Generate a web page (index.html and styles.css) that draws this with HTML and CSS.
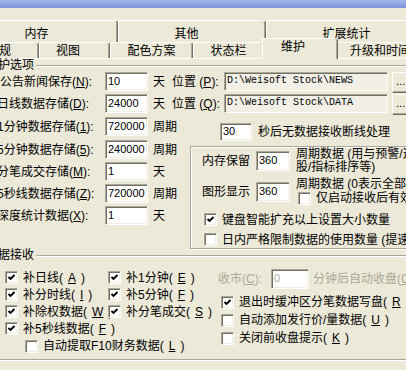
FILE: index.html
```html
<!DOCTYPE html>
<html lang="zh-CN">
<head>
    <meta charset="UTF-8">
    <title>系统设置</title>
    <link rel="stylesheet" href="styles.css">
</head>
<body>
    <div class="titlebar"></div>
    <div class="dialog">
        <div class="tab-row back">
            <div class="tab w-mem">内存</div>
            <div class="tab w-other">其他</div>
            <div class="tab w-ext">扩展统计</div>
        </div>
        <div class="tab-row front">
            <div class="tab w-gen">常规</div>
            <div class="tab w-view">视图</div>
            <div class="tab w-color">配色方案</div>
            <div class="tab w-status">状态栏</div>
            <div class="tab w-maint active">维护</div>
            <div class="tab w-up">升级和时间</div>
        </div>
        <div class="panel">
            <div class="group maint">
                <div class="group-title">维护选项</div>
                <div class="row first">
                    <span class="lbl">公告新闻保存(<u>N</u>):</span>
                    <span class="edit num">10</span>
                    <span class="unit">天</span>
                    <span class="pos">位置 (<u>P</u>):</span>
                    <span class="edit path">D:\Weisoft Stock\NEWS</span>
                    <span class="btn">...</span>
                </div>
                <div class="row">
                    <span class="lbl">日线数据存储(<u>D</u>):</span>
                    <span class="edit num">24000</span>
                    <span class="unit">天</span>
                    <span class="pos">位置 (<u>Q</u>):</span>
                    <span class="edit path">D:\Weisoft Stock\DATA</span>
                    <span class="btn">...</span>
                </div>
                <div class="split">
                    <div class="col-left">
                        <div class="row tall">
                            <span class="lbl">1分钟数据存储(<u>1</u>):</span>
                            <span class="edit num">720000</span>
                            <span class="unit">周期</span>
                        </div>
                        <div class="row">
                            <span class="lbl">5分钟数据存储(<u>5</u>):</span>
                            <span class="edit num">240000</span>
                            <span class="unit">周期</span>
                        </div>
                        <div class="row">
                            <span class="lbl">分笔成交存储(<u>M</u>):</span>
                            <span class="edit num">1</span>
                            <span class="unit">天</span>
                        </div>
                        <div class="row">
                            <span class="lbl">5秒线数据存储(<u>Z</u>):</span>
                            <span class="edit num">720000</span>
                            <span class="unit">周期</span>
                        </div>
                        <div class="row">
                            <span class="lbl">深度统计数据(<u>X</u>):</span>
                            <span class="edit num">1</span>
                            <span class="unit">天</span>
                        </div>
                    </div>
                    <div class="col-right">
                        <div class="timeout">
                            <span class="edit short">30</span>
                            <span class="timeout-text">秒后无数据接收断线处理</span>
                        </div>
                        <div class="subbox">
                            <div class="sub-row mem">
                                <span class="sub-lbl">内存保留</span>
                                <span class="edit mid">360</span>
                                <div class="note">周期数据 (用与预警/选<br>股/指标排序等)</div>
                            </div>
                            <div class="sub-row gfx">
                                <span class="sub-lbl">图形显示</span>
                                <span class="edit mid">360</span>
                                <div class="note">
                                    <div>周期数据 (0表示全部数据)</div>
                                    <label class="note-check"><span class="cb"></span>仅启动接收后有效</label>
                                </div>
                            </div>
                            <label class="check inner first-check"><span class="cb"><svg viewBox="0 0 9 9"><polyline points="1.5,4 3.5,6 7.5,2"/></svg></span>键盘智能扩充以上设置大小数量</label>
                            <label class="check inner"><span class="cb"></span>日内严格限制数据的使用数量 (提速)</label>
                        </div>
                    </div>
                </div>
            </div>

            <div class="group recv">
                <div class="group-title">数据接收</div>
                <div class="recv-body">
                    <div class="recv-left">
                        <div class="checks">
                            <label class="check"><span class="cb"><svg viewBox="0 0 9 9"><polyline points="1.5,4 3.5,6 7.5,2"/></svg></span>补日线(<u>A</u>)</label>
                            <label class="check"><span class="cb"><svg viewBox="0 0 9 9"><polyline points="1.5,4 3.5,6 7.5,2"/></svg></span>补1分钟(<u>E</u>)</label>
                            <label class="check"><span class="cb"><svg viewBox="0 0 9 9"><polyline points="1.5,4 3.5,6 7.5,2"/></svg></span>补分时线(<u>I</u>)</label>
                            <label class="check"><span class="cb"><svg viewBox="0 0 9 9"><polyline points="1.5,4 3.5,6 7.5,2"/></svg></span>补5分钟(<u>F</u>)</label>
                            <label class="check"><span class="cb"><svg viewBox="0 0 9 9"><polyline points="1.5,4 3.5,6 7.5,2"/></svg></span>补除权数据(<u>W</u>)</label>
                            <label class="check"><span class="cb"><svg viewBox="0 0 9 9"><polyline points="1.5,4 3.5,6 7.5,2"/></svg></span>补分笔成交(<u>S</u>)</label>
                            <label class="check"><span class="cb"><svg viewBox="0 0 9 9"><polyline points="1.5,4 3.5,6 7.5,2"/></svg></span>补5秒线数据(<u>F</u>)</label>
                        </div>
                        <label class="check f10"><span class="cb"></span>自动提取F10财务数据(<u>L</u>)</label>
                    </div>
                    <div class="recv-right">
                        <div class="close-row">
                            <span class="close-lbl">收市(<u>C</u>):</span>
                            <span class="edit close">0</span>
                            <span class="close-text">分钟后自动收盘(<u>O</u>)</span>
                        </div>
                        <label class="check tight"><span class="cb"><svg viewBox="0 0 9 9"><polyline points="1.5,4 3.5,6 7.5,2"/></svg></span>退出时缓冲区分笔数据写盘(<u>R</u>)</label>
                        <label class="check tight"><span class="cb"></span>自动添加发行价/量数据(<u>U</u>)</label>
                        <label class="check tight"><span class="cb"></span>关闭前收盘提示(<u>K</u>)</label>
                    </div>
                </div>
            </div>
        </div>
    </div>
</body>
</html>
```

FILE: styles.css
```css
* {
    box-sizing: border-box;
}
body {
    margin: 0;
    width: 406px;
    height: 370px;
    overflow: hidden;
    background: #ece9d8;
    font-family: "Liberation Sans", "Noto Sans CJK SC", sans-serif;
    font-size: 12px;
    line-height: 14px;
    color: #000;
    white-space: nowrap;
}
.titlebar {
    height: 8px;
    background: linear-gradient(#a3b5ea, #7e96dc);
}
.dialog {
    width: 500px;
    margin-left: -30px;
    padding-top: 12px;
}

/* tabs */
.tab-row {
    display: flex;
    align-items: flex-start;
}
.tab-row.back {
    height: 22px;
    margin-left: -15px;
}
.tab-row.front {
    height: 16px;
    margin-left: -11px;
}
.tab {
    flex: none;
    text-align: center;
    border-top: 1px solid #fff;
    border-left: 1px solid #fff;
    border-right: 1px solid #716f64;
    box-shadow: inset -1px 0 0 #aca899;
    border-radius: 3px 3px 0 0;
}
.back .tab {
    height: 22px;
    padding-top: 6px;
}
.front .tab {
    height: 16px;
    padding-top: 1px;
}
.tab.active {
    position: relative;
    z-index: 1;
    height: 21px;
    margin: -4px -2px 0;
    background: #ece9d8;
}
.w-mem { width: 163px; }
.w-other { width: 148px; padding-right: 11px; }
.w-ext { width: 161px; }
.w-gen { width: 80px; }
.w-view { width: 71px; padding-right: 13px; }
.w-color { width: 83px; }
.w-status { width: 71px; }
.w-maint { width: 76px; padding-right: 14px; }
.w-up { width: 88px; }

.panel {
    border-top: 1px solid #fff;
    border-left: 1px solid #fff;
}

/* group boxes */
.group {
    width: 470px;
    margin-left: 7px;
    padding-left: 18px;
    border: 1px solid #aca899;
    box-shadow: inset 1px 1px 0 #fff, 1px 1px 0 #fff;
}
.group-title {
    width: fit-content;
    margin: -7px 0 1px -13px;
    padding: 0 2px;
    line-height: 12px;
    background: #ece9d8;
}
.group.maint {
    margin-top: 6px;
    border-bottom: 0;
    box-shadow: inset 1px 1px 0 #fff;
}
.group.recv {
    margin-top: 6px;
    padding-bottom: 4px;
}

/* edit fields */
.edit {
    display: block;
    flex: none;
    height: 19px;
    padding: 0 2px;
    background: #fff;
    border: 1px solid;
    border-color: #aca899 #fff #fff #aca899;
    box-shadow: inset 1px 1px 0 #716f64, inset -1px -1px 0 #f1efe2;
    font-size: 11px;
    line-height: 16px;
}
.edit.num { width: 43px; }
.edit.short { width: 32px; height: 18px; line-height: 15px; }
.edit.mid { width: 34px; height: 20px; line-height: 17px; }
.edit.close { width: 38px; height: 20px; line-height: 17px; }
.edit.path {
    width: 164px;
    padding-left: 2px;
    background: #f1efe6;
    font-family: "Liberation Mono", "Courier New", monospace;
    font-size: 10px;
}
.btn {
    flex: none;
    width: 22px;
    height: 21px;
    margin-left: 4px;
    padding-left: 3px;
    border: 1px solid;
    border-color: #fff #716f64 #716f64 #fff;
    box-shadow: inset -1px -1px 0 #aca899;
    font-size: 11px;
    line-height: 17px;
}

/* maintenance rows */
.row {
    display: flex;
    align-items: flex-start;
    height: 22px;
}
.row.tall {
    height: 23px;
}
.lbl {
    flex: none;
    width: 108px;
    line-height: 20px;
}
.row.first .lbl {
    padding-left: 3px;
}
.unit {
    margin-left: 5px;
    line-height: 20px;
}
.pos {
    flex: none;
    width: 52px;
    margin-left: 7px;
    line-height: 20px;
}
.split {
    display: flex;
    margin-top: 1px;
}
.col-left {
    flex: none;
    width: 193px;
}
.timeout {
    display: flex;
    align-items: center;
    margin: 6px 0 0 30px;
}
.timeout-text {
    margin-left: 6px;
}
.subbox {
    width: 260px;
    margin-top: 5px;
    padding: 1px 0 0 11px;
    border: 1px solid #aca899;
    box-shadow: inset 1px 1px 0 #fff, 1px 1px 0 #fff;
}
.sub-row {
    display: flex;
    align-items: center;
}
.sub-row.mem {
    height: 26px;
}
.sub-row.gfx {
    height: 30px;
    margin-top: 3px;
}
.sub-lbl {
    flex: none;
    width: 54px;
}
.note {
    margin-left: 6px;
    line-height: 13px;
}
.note-check {
    display: flex;
    align-items: center;
    gap: 5px;
    height: 16px;
    padding-left: 2px;
}

/* checkboxes */
.check {
    display: flex;
    align-items: center;
    gap: 5px;
    height: 17px;
}
.cb {
    display: flex;
    align-items: center;
    justify-content: center;
    flex: none;
    width: 13px;
    height: 13px;
    background: #fff;
    border: 1px solid;
    border-color: #aca899 #fff #fff #aca899;
    box-shadow: inset 1px 1px 0 #716f64, inset -1px -1px 0 #f1efe2;
}
.cb svg {
    width: 9px;
    height: 9px;
    fill: none;
    stroke: #000;
    stroke-width: 1.9;
}
.check.inner {
    margin-left: 2px;
    margin-top: 3px;
}
.check.inner.first-check {
    margin-top: 4px;
}

/* data receive */
.recv-body {
    display: flex;
    margin-top: 8px;
}
.recv-left {
    flex: none;
    width: 221px;
    padding-left: 8px;
}
.checks {
    display: grid;
    grid-template-columns: 103px auto;
    grid-auto-rows: 17px;
}
.check.f10 {
    height: 18px;
    margin-left: 20px;
}
.close-row {
    display: flex;
    align-items: center;
    height: 20px;
    color: #aca899;
}
.close-lbl {
    width: 53px;
}
.close-text {
    margin-left: 4px;
}
.check.tight {
    height: 18px;
    margin-left: 3px;
}
.close-row + .check.tight {
    margin-top: 4px;
}
```
